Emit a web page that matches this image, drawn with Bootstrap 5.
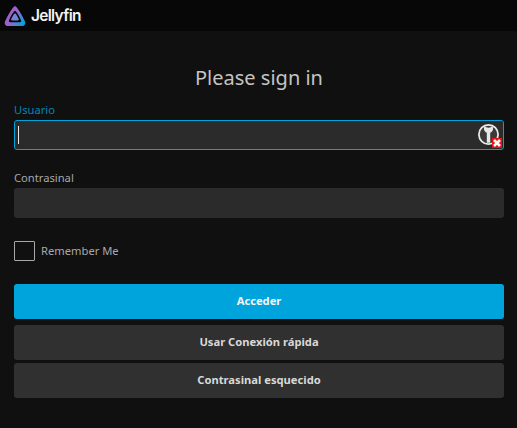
<!DOCTYPE html>
<html lang="en">
<head>
  <meta charset="UTF-8" />
  <title>Jellyfin</title>
  <meta name="viewport" content="width=device-width, initial-scale=1" />
  <link href="https://cdn.jsdelivr.net/npm/bootstrap@5.3.0/dist/css/bootstrap.min.css" rel="stylesheet">
  <style>
    body {
      background-color: #101010;
      color: #c8c8c8;
      font-family: "Noto Sans", sans-serif;
      height: 428px;
      overflow: hidden;
    }
    .top-bar {
      background-color: #070707;
      height: 31px;
      padding-left: 4px;
    }
    .brand-name {
      color: #f2f2f2;
      font-family: "Inter", sans-serif;
      font-size: 15.5px;
      font-weight: 600;
      letter-spacing: -0.7px;
      margin-left: 5px;
    }
    .login-area {
      padding: 33px 13px 0 14px;
    }
    .login-title {
      color: #c4c4c4;
      font-size: 20px;
      font-weight: 400;
      line-height: 27px;
      margin-bottom: 11px;
      text-align: center;
    }
    .field-label {
      color: #a8a8a8;
      font-size: 11.2px;
      line-height: 15px;
      margin-bottom: 3px;
      display: block;
    }
    .field-label.active-label {
      color: #0086b3;
    }
    .field-input {
      background-color: #2b2b2b;
      border: 0;
      border-radius: 3px;
      color: #e0e0e0;
      height: 30px;
      padding: 0 3px;
    }
    .field-input:focus {
      background-color: #2b2b2b;
      box-shadow: none;
      color: #e0e0e0;
      outline: 0;
    }
    .field-focus {
      border: 1px solid #00a4dc;
    }
    .field-focus:focus {
      border-color: #00a4dc;
    }
    .user-field {
      margin-bottom: 20px;
    }
    .pass-field {
      margin-bottom: 23px;
    }
    .key-icon {
      position: absolute;
      right: 1px;
      top: 3px;
    }
    .caret-line {
      position: absolute;
      left: 4px;
      top: 6px;
      width: 1px;
      height: 18px;
      background-color: #e8e8e8;
    }
    .remember-row {
      margin-bottom: 23px;
    }
    .remember-box {
      width: 21px;
      height: 20px;
      border: 1px solid #a8a8a8;
      border-radius: 1px;
      background: transparent;
      margin: 0 6px 0 0;
      appearance: none;
      flex: none;
    }
    .remember-label {
      color: #a8a8a8;
      font-size: 11.2px;
    }
    .action-btn {
      border: 0;
      border-radius: 3px;
      font-size: 11.2px;
      font-weight: 700;
      height: 35px;
      padding: 0;
      width: 100%;
      display: block;
    }
    .btn-signin {
      background-color: #00a4dc;
      color: #f4f4f4;
      margin-bottom: 6px;
    }
    .btn-dim {
      background-color: #303030;
      color: #d8d8d8;
      margin-bottom: 3px;
    }
  </style>
</head>
<body>
  <header class="top-bar d-flex align-items-center">
    <svg width="22" height="22" viewBox="0 0 22 22" aria-hidden="true">
      <defs>
        <linearGradient id="logoGrad" x1="0" y1="0.2" x2="1" y2="0.8">
          <stop offset="0" stop-color="#aa5cc3" />
          <stop offset="0.45" stop-color="#9a62cc" />
          <stop offset="1" stop-color="#00a4dc" />
        </linearGradient>
      </defs>
      <path fill="url(#logoGrad)" fill-rule="evenodd" d="M11 1c-1.700 0-7 9-10 15.500-.9 2 .4 4.500 2.500 4.500h15c2.100 0 3.400-2.500 2.500-4.500C18 10 12.700 1 11 1zm0 4.800c1.100 0 4.300 5.600 6 9.500.5 1.100-.1 2-1.300 2H6.300c-1.200 0-1.800-.9-1.300-2 1.700-3.900 4.900-9.500 6-9.500z" />
      <path fill="#6f86d8" d="M11 8.300c-.8 0-3.400 4.700-3.800 6-.2.700.2 1.200.9 1.200h5.800c.7 0 1.100-.5.900-1.200-.4-1.300-3-6-3.800-6z" />
    </svg>
    <span class="brand-name">Jellyfin</span>
  </header>

  <main class="login-area">
    <h1 class="login-title">Please sign in</h1>

    <form>
      <label class="field-label active-label" for="userInput">Usuario</label>
      <div class="position-relative user-field">
        <input id="userInput" class="form-control field-input field-focus" type="text" />
        <span class="caret-line"></span>
        <svg class="key-icon" width="26" height="26" viewBox="0 0 26 26" aria-hidden="true">
          <circle cx="11.500" cy="11.500" r="10.500" fill="#3a3a3a" />
          <circle cx="11.500" cy="11.500" r="9.600" fill="none" stroke="#e8e8e8" stroke-width="1.800" />
          <path fill="#e8e8e8" d="M7.500 3.500c1.200.2 1.800 1.200 4 1.200s2.800-1 4-1.200c1 1.600.7 4.300-1 5.500l-1.300.8v10h-3.400v-10L8.500 9C6.800 7.800 6.500 5.100 7.500 3.500z" />
          <rect x="15" y="15" width="10" height="10" fill="#ee1111" />
          <path d="M17 17l6 6m0-6l-6 6" stroke="#ffffff" stroke-width="2.600" />
        </svg>
      </div>

      <label class="field-label" for="passInput">Contrasinal</label>
      <input id="passInput" class="form-control field-input pass-field" type="password" />

      <div class="d-flex align-items-center remember-row">
        <input id="rememberMe" class="remember-box" type="checkbox" />
        <label class="remember-label" for="rememberMe">Remember Me</label>
      </div>

      <button class="action-btn btn-signin" type="button">Acceder</button>
      <button class="action-btn btn-dim" type="button">Usar Conexión rápida</button>
      <button class="action-btn btn-dim" type="button">Contrasinal esquecido</button>
    </form>
  </main>
</body>
</html>
